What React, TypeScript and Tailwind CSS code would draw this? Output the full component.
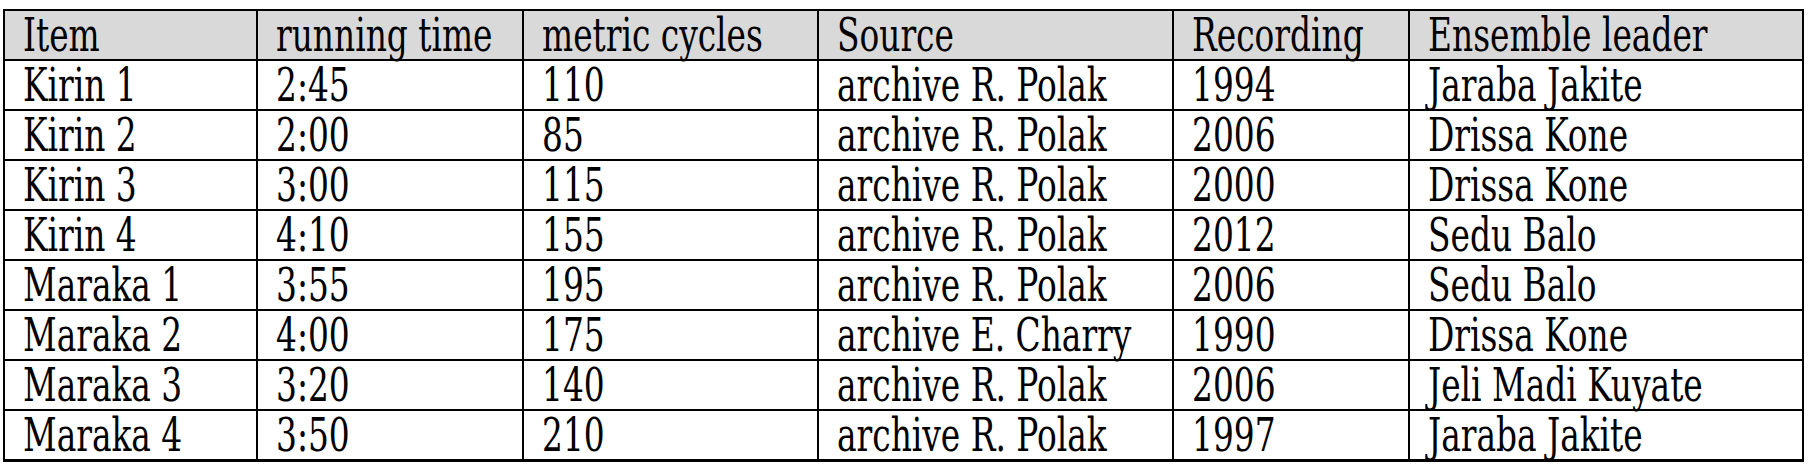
const columns = ["Item", "running time", "metric cycles", "Source", "Recording", "Ensemble leader"]

const rows = [
  ["Kirin 1", "2:45", "110", "archive R. Polak", "1994", "Jaraba Jakite"],
  ["Kirin 2", "2:00", "85", "archive R. Polak", "2006", "Drissa Kone"],
  ["Kirin 3", "3:00", "115", "archive R. Polak", "2000", "Drissa Kone"],
  ["Kirin 4", "4:10", "155", "archive R. Polak", "2012", "Sedu Balo"],
  ["Maraka 1", "3:55", "195", "archive R. Polak", "2006", "Sedu Balo"],
  ["Maraka 2", "4:00", "175", "archive E. Charry", "1990", "Drissa Kone"],
  ["Maraka 3", "3:20", "140", "archive R. Polak", "2006", "Jeli Madi Kuyate"],
  ["Maraka 4", "3:50", "210", "archive R. Polak", "1997", "Jaraba Jakite"],
]

function Cell({ text }: { text: string }) {
  return <span className="inline-block origin-center scale-y-[1.3]">{text}</span>
}

export default function App() {
  return (
    <div className="w-[1808px] h-[467px] bg-white pt-[9px] pl-[3px]">
      <table className="w-[1801px] table-fixed border-collapse border-b-[3px] border-black text-black text-[36.5px] leading-none font-['DejaVu_Serif_Condensed','DejaVu_Serif',serif] [font-stretch:condensed]">
        <colgroup>
          <col className="w-[253px]" />
          <col className="w-[266px]" />
          <col className="w-[295px]" />
          <col className="w-[355px]" />
          <col className="w-[236px]" />
          <col />
        </colgroup>
        <thead>
          <tr className="bg-[#d9d9d9] h-[50px]">
            {columns.map((c) => (
              <th key={c} className="border-2 border-black px-[18px] text-left font-normal">
                <Cell text={c} />
              </th>
            ))}
          </tr>
        </thead>
        <tbody>
          {rows.map((r) => (
            <tr key={r[0]} className="h-[50px]">
              {r.map((cell, i) => (
                <td key={i} className="border-2 border-black px-[18px] whitespace-nowrap">
                  <Cell text={cell} />
                </td>
              ))}
            </tr>
          ))}
        </tbody>
      </table>
    </div>
  )
}
